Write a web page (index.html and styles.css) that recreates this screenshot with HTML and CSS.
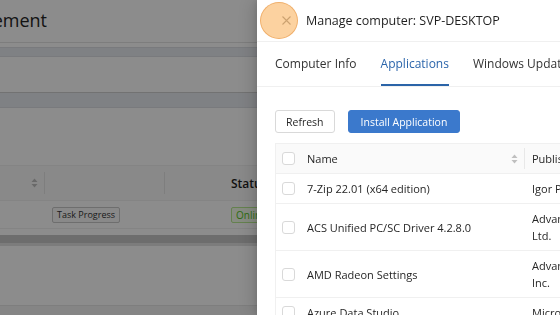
FILE: index.html
```html
<!DOCTYPE html>
<html lang="en">
<head>
  <meta charset="UTF-8">
  <meta name="viewport" content="width=device-width, initial-scale=1.0">
  <title>Manage computer: SVP-DESKTOP</title>
  <link rel="stylesheet" href="styles.css">
</head>
<body>
  <!-- page behind the drawer -->
  <div class="page">
    <header class="page-header">
      <div class="page-title"><span>Computer Management</span></div>
    </header>
    <div class="band band-top"></div>
    <div class="spacer spacer-a"></div>
    <div class="band band-filter"></div>
    <div class="spacer spacer-b"></div>

    <div class="bg-table">
      <div class="bg-row bg-head">
        <div class="bg-cell bg-c1">
          <svg class="sorter" width="7" height="10" viewBox="0 0 7 10"><path d="M3.5 0.5 L6.5 4 H0.5 Z M3.5 9.5 L6.5 6 H0.5 Z" fill="#bfbfbf"/></svg>
        </div>
        <div class="bg-cell bg-c2"></div>
        <div class="bg-cell bg-c3">Status</div>
      </div>
      <div class="bg-row">
        <div class="bg-cell bg-c1"></div>
        <div class="bg-cell bg-c2"><span class="small-btn">Task Progress</span></div>
        <div class="bg-cell bg-c3"><span class="tag-online">Online</span></div>
      </div>
    </div>
    <div class="scroll-gap"></div>
    <div class="scrollbar"></div>
    <div class="spacer spacer-c"></div>
    <div class="page-footer"></div>
  </div>

  <div class="mask"></div>

  <!-- drawer -->
  <aside class="drawer">
    <div class="drawer-header">
      <button class="close-btn" aria-label="Close">
        <svg width="9" height="9" viewBox="0 0 9 9"><path d="M0.5 0.5 L8.5 8.5 M8.5 0.5 L0.5 8.5" stroke="#8c8c8c" stroke-width="1.1"/></svg>
      </button>
      <div class="drawer-title">Manage computer: SVP-DESKTOP</div>
      <span class="click-mark"></span>
    </div>

    <nav class="tabs">
      <div class="tab">Computer Info</div>
      <div class="tab active">Applications</div>
      <div class="tab">Windows Updates</div>
      <div class="tab">Hardware</div>
    </nav>

    <div class="drawer-body">
      <div class="actions">
        <button class="btn">Refresh</button>
        <button class="btn btn-primary">Install Application</button>
      </div>

      <div class="app-table">
        <div class="app-row app-head">
          <div class="cell cell-check"><span class="checkbox"></span></div>
          <div class="cell cell-name">Name
            <svg class="sorter" width="7" height="10" viewBox="0 0 7 10"><path d="M3.5 0.5 L6.5 4 H0.5 Z M3.5 9.5 L6.5 6 H0.5 Z" fill="#bfbfbf"/></svg>
          </div>
          <div class="cell cell-pub">Publisher</div>
        </div>
        <div class="app-row">
          <div class="cell cell-check"><span class="checkbox"></span></div>
          <div class="cell cell-name">7-Zip 22.01 (x64 edition)</div>
          <div class="cell cell-pub">Igor Pavlov</div>
        </div>
        <div class="app-row">
          <div class="cell cell-check"><span class="checkbox"></span></div>
          <div class="cell cell-name">ACS Unified PC/SC Driver 4.2.8.0</div>
          <div class="cell cell-pub">Advanced Card Systems<br>Ltd.</div>
        </div>
        <div class="app-row">
          <div class="cell cell-check"><span class="checkbox"></span></div>
          <div class="cell cell-name">AMD Radeon Settings</div>
          <div class="cell cell-pub">Advanced Micro Devices,<br>Inc.</div>
        </div>
        <div class="app-row">
          <div class="cell cell-check"><span class="checkbox"></span></div>
          <div class="cell cell-name">Azure Data Studio</div>
          <div class="cell cell-pub">Microsoft Corporation</div>
        </div>
      </div>
    </div>
  </aside>
</body>
</html>
```

FILE: styles.css
```css
/* base */
* {
  box-sizing: border-box;
}
body {
  margin: 0;
  font-family: "Open Sans", "Liberation Sans", sans-serif;
  color: #262626;
  background: #fff;
  overflow: hidden;
  height: 315px;
}

/* background page */
.page {
  width: 560px;
}
.page-header {
  height: 43px;
  border-bottom: 1px solid #e3e3e3;
  display: flex;
  align-items: center;
}
.page-title {
  width: 47px;
  overflow: hidden;
  display: flex;
  justify-content: flex-end;
  white-space: nowrap;
  font-size: 18px;
  color: #262626;
  padding-bottom: 2px;
}
.band {
  background: #e8ebf0;
  border-top: 1px solid #dcdfe4;
  border-bottom: 1px solid #dcdfe4;
}
.band-top {
  height: 10px;
  margin-top: 4px;
}
.spacer-a {
  height: 35px;
}
.band-filter {
  height: 16px;
  border-top-color: #cfcfcf;
}
.spacer-b {
  height: 57px;
}
.bg-table {
  font-size: 12px;
}
.bg-row {
  display: flex;
  height: 28px;
  border-bottom: 1px solid #f0f0f0;
  align-items: center;
}
.bg-head {
  height: 36px;
  background: #fafafa;
  border-top: 1px solid #f0f0f0;
}
.bg-cell {
  position: relative;
  height: 100%;
  display: flex;
  align-items: center;
}
.bg-c1 {
  width: 45px;
  justify-content: flex-end;
  padding-right: 6px;
}
.bg-c2 {
  width: 120px;
  padding-left: 7px;
}
.bg-c3 {
  padding-left: 66px;
  font-weight: 600;
  color: #1f1f1f;
}
.bg-head .bg-c1,
.bg-head .bg-c2 {
  border-right: 1px solid #e6e6e6;
}
.bg-head .bg-cell {
  height: 22px;
}
.small-btn {
  font-size: 9px;
  border: 1px solid #c9c9c9;
  border-radius: 2px;
  background: #fafafa;
  padding: 0 4px;
  line-height: 14px;
  color: #333;
}
.tag-online {
  font-size: 10px;
  font-weight: 400;
  color: #52c41a;
  background: #f6ffed;
  border: 1px solid #b7eb8f;
  border-radius: 2px;
  padding: 0 4px;
  line-height: 14px;
}
.scroll-gap {
  height: 6px;
}
.scrollbar {
  height: 11px;
  background: #c6c6c6;
  border-bottom: 3px solid #e2e2e2;
}
.spacer-c {
  height: 59px;
}
.page-footer {
  height: 20px;
  background: #f2f2f2;
  border-top: 1px solid #e6e6e6;
}

/* mask over page */
.mask {
  position: fixed;
  inset: 0;
  background: rgba(0, 0, 0, 0.45);
}

/* drawer */
.drawer {
  position: fixed;
  top: 0;
  bottom: 0;
  left: 257px;
  width: 620px;
  background: #fff;
  box-shadow: -6px 0 16px rgba(0, 0, 0, 0.12), -2px 0 4px rgba(0, 0, 0, 0.08);
}
.drawer-header {
  position: relative;
  height: 42px;
  display: flex;
  align-items: center;
  padding-left: 25px;
  border-bottom: 1px solid #f0f0f0;
}
.close-btn {
  border: none;
  background: none;
  padding: 0;
  width: 9px;
  height: 9px;
  margin-right: 15px;
  display: flex;
  cursor: pointer;
}
.drawer-title {
  font-size: 12.5px;
  color: #1f1f1f;
}
/* click highlight circle from the recording */
.click-mark {
  position: absolute;
  left: 3px;
  top: 2px;
  width: 38px;
  height: 37px;
  border-radius: 50%;
  background: rgba(250, 178, 92, 0.58);
  border: 1px solid rgba(232, 152, 70, 0.6);
}

.tabs {
  display: flex;
  gap: 24px;
  padding-left: 18px;
  height: 45px;
  border-bottom: 1px solid #f0f0f0;
  white-space: nowrap;
}
.tab {
  font-size: 12px;
  color: #333;
  display: flex;
  align-items: center;
  padding-top: 1px;
  border-bottom: 2px solid transparent;
}
.tab.active {
  color: #2b65ab;
  border-bottom-color: #2b64a8;
}

.drawer-body {
  padding: 23px 0 0 18px;
}
.actions {
  display: flex;
  gap: 13px;
  margin-bottom: 10px;
}
.btn {
  font-family: inherit;
  font-size: 10.5px;
  height: 23px;
  padding: 0 10px;
  border: 1px solid #d9d9d9;
  border-radius: 3px;
  background: #fff;
  color: #262626;
}
.btn-primary {
  background: #3b79cc;
  border-color: #3b79cc;
  color: #fff;
  padding: 0 12px;
}

.app-table {
  border-left: 1px solid #f0f0f0;
  border-top: 1px solid #f0f0f0;
  font-size: 11px;
  color: #262626;
}
.app-row {
  display: flex;
  border-bottom: 1px solid #f0f0f0;
}
.app-head {
  background: #fafafa;
}
.cell {
  padding: 6px 6px;
  line-height: 17px;
  display: flex;
  align-items: center;
}
.cell-check {
  width: 31px;
  padding-left: 6px;
}
.cell-name {
  width: 218px;
  padding-left: 0;
  white-space: nowrap;
  position: relative;
}
.cell-pub {
  padding-left: 7px;
  white-space: nowrap;
}
.app-head .cell-name {
  justify-content: space-between;
  padding-right: 6px;
}
.app-head .cell-name::after {
  content: "";
  position: absolute;
  right: 0;
  top: 4px;
  bottom: 4px;
  border-right: 1px solid #e8e8e8;
}
.app-head .cell-name .sorter {
  margin-right: 1px;
}
.checkbox {
  display: block;
  width: 13px;
  height: 13px;
  border: 1px solid #d9d9d9;
  border-radius: 3px;
  background: #fff;
}
```
